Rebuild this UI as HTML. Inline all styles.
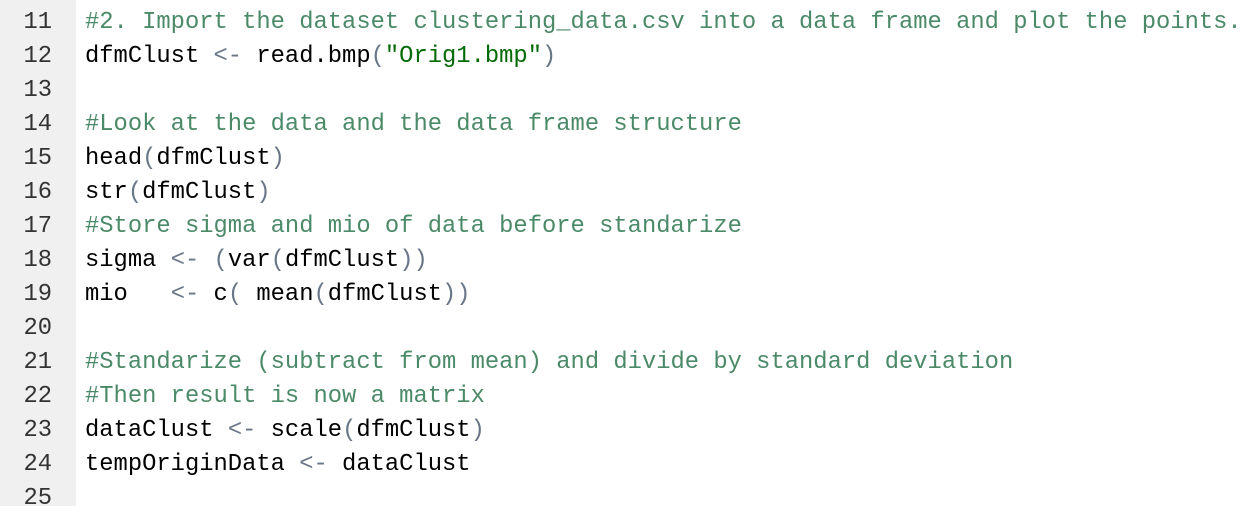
<!DOCTYPE html><html><head><style>
body{margin:0;width:1254px;height:506px;overflow:hidden;background:#fff;font-family:"Liberation Mono",monospace;font-size:23.8px}
.g{position:absolute;left:0;top:0;width:76px;height:506px;background:#f0f0f0}
.l{position:absolute;left:0;height:34px;line-height:34px;white-space:pre}
.n{width:52px;text-align:right;color:#333}
.c{left:85px;color:#000}
.cm{color:#4b8a68}.o{color:#687687}.s{color:#036a07}
.w{position:absolute;left:0;top:2px;width:1254px}
</style></head><body><div class="g"></div><div class="w">
<div class="l n" style="top:4px">11</div><div class="l c" style="top:4px"><span class="cm">#2. Import the dataset clustering_data.csv into a data frame and plot the points.</span></div>
<div class="l n" style="top:38px">12</div><div class="l c" style="top:38px">dfmClust <span class="o">&lt;-</span> read.bmp<span class="o">(</span><span class="s">"Orig1.bmp"</span><span class="o">)</span></div>
<div class="l n" style="top:72px">13</div>
<div class="l n" style="top:106px">14</div><div class="l c" style="top:106px"><span class="cm">#Look at the data and the data frame structure</span></div>
<div class="l n" style="top:140px">15</div><div class="l c" style="top:140px">head<span class="o">(</span>dfmClust<span class="o">)</span></div>
<div class="l n" style="top:174px">16</div><div class="l c" style="top:174px">str<span class="o">(</span>dfmClust<span class="o">)</span></div>
<div class="l n" style="top:208px">17</div><div class="l c" style="top:208px"><span class="cm">#Store sigma and mio of data before standarize</span></div>
<div class="l n" style="top:242px">18</div><div class="l c" style="top:242px">sigma <span class="o">&lt;-</span> <span class="o">(</span>var<span class="o">(</span>dfmClust<span class="o">))</span></div>
<div class="l n" style="top:276px">19</div><div class="l c" style="top:276px">mio   <span class="o">&lt;-</span> c<span class="o">(</span> mean<span class="o">(</span>dfmClust<span class="o">))</span></div>
<div class="l n" style="top:310px">20</div>
<div class="l n" style="top:344px">21</div><div class="l c" style="top:344px"><span class="cm">#Standarize (subtract from mean) and divide by standard deviation</span></div>
<div class="l n" style="top:378px">22</div><div class="l c" style="top:378px"><span class="cm">#Then result is now a matrix</span></div>
<div class="l n" style="top:412px">23</div><div class="l c" style="top:412px">dataClust <span class="o">&lt;-</span> scale<span class="o">(</span>dfmClust<span class="o">)</span></div>
<div class="l n" style="top:446px">24</div><div class="l c" style="top:446px">tempOriginData <span class="o">&lt;-</span> dataClust</div>
<div class="l n" style="top:480px">25</div>
</div></body></html>
